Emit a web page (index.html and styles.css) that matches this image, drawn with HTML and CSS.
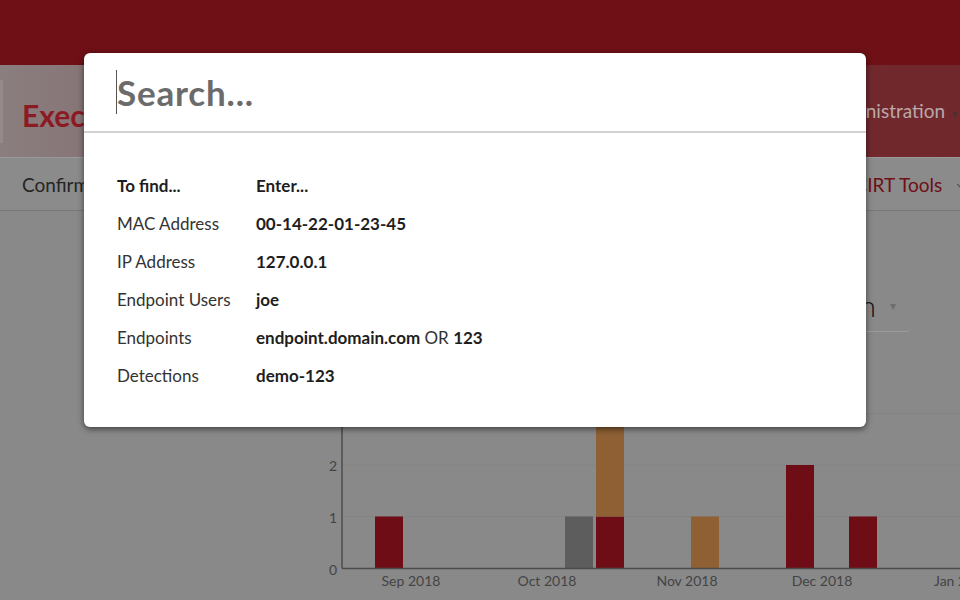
FILE: index.html
```html
<!DOCTYPE html>
<html lang="en">

<head>
    <meta charset="UTF-8">
    <meta name="viewport" content="width=device-width, initial-scale=1.0">
    <title>Executive Dashboard</title>
    <link rel="stylesheet" href="styles.css">
</head>

<body>
    <div class="topbar"></div>

    <div class="header">
        <div class="logo-edge"></div>
        <h1 class="title">Executive Dashboard</h1>
        <div class="admin">Administration <span class="caret">&#9662;</span></div>
    </div>

    <div class="nav">
        <span class="nav-item">Confirmed Detections</span>
        <span class="nav-item nav-tools">CIRT Tools <span class="chev">&#8964;</span></span>
    </div>

    <div class="main">
        <div class="select-row">
            <div class="select-box">Detection <span class="select-caret">&#9662;</span></div>
        </div>

        <div class="chart">
            <svg width="640" height="220" viewBox="0 0 640 220">
                <!-- grid -->
                <line x1="22" y1="136.5" x2="640" y2="136.5" class="grid" />
                <line x1="22" y1="85" x2="640" y2="85" class="grid" />
                <line x1="22" y1="33.5" x2="640" y2="33.5" class="grid" />

                <!-- bars -->
                <rect x="55" y="136.5" width="28" height="51.5" class="bar-red" />
                <rect x="245" y="136.5" width="28" height="51.5" class="bar-grey" />
                <rect x="276" y="136.5" width="28" height="51.5" class="bar-red" />
                <rect x="276" y="33.5" width="28" height="103" class="bar-orange" />
                <rect x="371" y="136.5" width="28" height="51.5" class="bar-orange" />
                <rect x="466" y="85" width="28" height="103" class="bar-red" />
                <rect x="529" y="136.5" width="28" height="51.5" class="bar-red" />

                <!-- axes -->
                <line x1="22" y1="0" x2="22" y2="188.5" class="axis" />
                <line x1="22" y1="188.5" x2="640" y2="188.5" class="axis" />

                <text x="17" y="195" class="ylabel">0</text>
                <text x="17" y="143" class="ylabel">1</text>
                <text x="17" y="91" class="ylabel">2</text>

                <text x="91" y="206" class="xlabel">Sep 2018</text>
                <text x="227" y="206" class="xlabel">Oct 2018</text>
                <text x="367" y="206" class="xlabel">Nov 2018</text>
                <text x="502" y="206" class="xlabel">Dec 2018</text>
                <text x="614" y="206" class="xlabel-start">Jan 2019</text>
            </svg>
        </div>
    </div>

    <div class="modal">
        <div class="search-row">
            <span class="cursor"></span>
            <input type="text" class="search-input" placeholder="Search...">
        </div>
        <div class="help">
            <table class="help-table">
                <thead>
                    <tr>
                        <th>To find...</th>
                        <th>Enter...</th>
                    </tr>
                </thead>
                <tbody>
                    <tr>
                        <td>MAC Address</td>
                        <td><b>00-14-22-01-23-45</b></td>
                    </tr>
                    <tr>
                        <td>IP Address</td>
                        <td><b>127.0.0.1</b></td>
                    </tr>
                    <tr>
                        <td>Endpoint Users</td>
                        <td><b>joe</b></td>
                    </tr>
                    <tr>
                        <td>Endpoints</td>
                        <td><b>endpoint.domain.com</b> OR <b>123</b></td>
                    </tr>
                    <tr>
                        <td>Detections</td>
                        <td><b>demo-123</b></td>
                    </tr>
                </tbody>
            </table>
        </div>
    </div>
</body>

</html>
```

FILE: styles.css
```css
* {
    margin: 0;
    padding: 0;
    box-sizing: border-box;
}

body {
    width: 960px;
    height: 600px;
    overflow: hidden;
    background: #898989;
    font-family: Lato, "Open Sans", sans-serif;
    position: relative;
}

/* dimmed page behind the search modal */
.topbar {
    height: 65px;
    background: #6e1016;
}

.header {
    height: 92px;
    background: linear-gradient(to right, #8a7e7f 0%, #7f5557 40%, #71292d 80%, #71282c 100%);
    display: flex;
    align-items: center;
    justify-content: space-between;
    padding: 0 2px 0 22px;
    position: relative;
}

.logo-edge {
    position: absolute;
    left: 0;
    top: 15px;
    width: 3px;
    height: 63px;
    background: #958a8b;
}

.title {
    font-size: 30px;
    font-weight: 700;
    color: #8c1a22;
    margin-top: 8px;
}

.admin {
    font-size: 19px;
    color: #b9a9aa;
    margin-top: -2px;
}

.caret {
    font-size: 11px;
    color: #4a3030;
    margin-left: 2px;
}

.nav {
    height: 54px;
    background: #8b8b8b;
    border-top: 1px solid #999;
    border-bottom: 1px solid #777;
    display: flex;
    align-items: center;
    justify-content: space-between;
    padding: 0 0 0 22px;
    font-size: 19px;
}

.nav-item {
    color: #252525;
}

.nav-tools {
    color: #6e1016;
    margin-right: -8px;
}

.chev {
    color: #5a5a5a;
    font-size: 18px;
    margin-left: 6px;
    position: relative;
    top: -4px;
}

.main {
    padding-top: 68px;
}

.select-row {
    display: flex;
    justify-content: flex-end;
    padding-right: 50px;
}

.select-box {
    height: 53px;
    padding: 0 14px 0 0;
    border-bottom: 1px solid #9b9b9b;
    border-bottom-right-radius: 4px;
    font-size: 30px;
    font-weight: 300;
    color: #161616;
    display: flex;
    align-items: center;
}

.select-caret {
    font-size: 12px;
    color: #6d6d6d;
    margin-left: 14px;
}

.chart {
    margin-top: 48px;
    padding-left: 320px;
}

.chart svg {
    display: block;
}

.grid {
    stroke: #838383;
    stroke-width: 1;
}

.axis {
    stroke: #4d4d4d;
    stroke-width: 1.5;
}

.bar-red {
    fill: #6e0d15;
}

.bar-grey {
    fill: #5d5d5d;
}

.bar-orange {
    fill: #8e6034;
}

.ylabel {
    font-family: Lato, sans-serif;
    font-size: 14px;
    fill: #444;
    text-anchor: end;
}

.xlabel,
.xlabel-start {
    font-family: Lato, sans-serif;
    font-size: 14px;
    fill: #444;
    text-anchor: middle;
}

.xlabel-start {
    text-anchor: start;
}

/* search modal */
.modal {
    position: absolute;
    left: 84px;
    top: 53px;
    width: 782px;
    height: 374px;
    background: #fff;
    border-radius: 6px;
    box-shadow: 0 2px 6px rgba(0, 0, 0, 0.55);
}

.search-row {
    height: 80px;
    display: flex;
    align-items: center;
    padding-left: 32px;
    border-bottom: 2px solid #d2d2d2;
}

.cursor {
    width: 1px;
    height: 44px;
    background: #555;
}

.search-input {
    border: none;
    outline: none;
    flex: 1;
    font-family: Lato, sans-serif;
    font-size: 35px;
    font-weight: 700;
    letter-spacing: 0.8px;
    color: #333;
    background: transparent;
}

.search-input::placeholder {
    color: #6b6b6b;
}

.help {
    padding: 33px 33px 0 33px;
}

.help-table {
    border-collapse: collapse;
    font-size: 17px;
    color: #333;
}

.help-table th,
.help-table td {
    height: 38px;
    text-align: left;
    padding: 0;
}

.help-table th {
    font-weight: 700;
    color: #1e1e1e;
}

.help-table td:first-child,
.help-table th:first-child {
    width: 139px;
}

.help-table b {
    color: #1e1e1e;
}
```
